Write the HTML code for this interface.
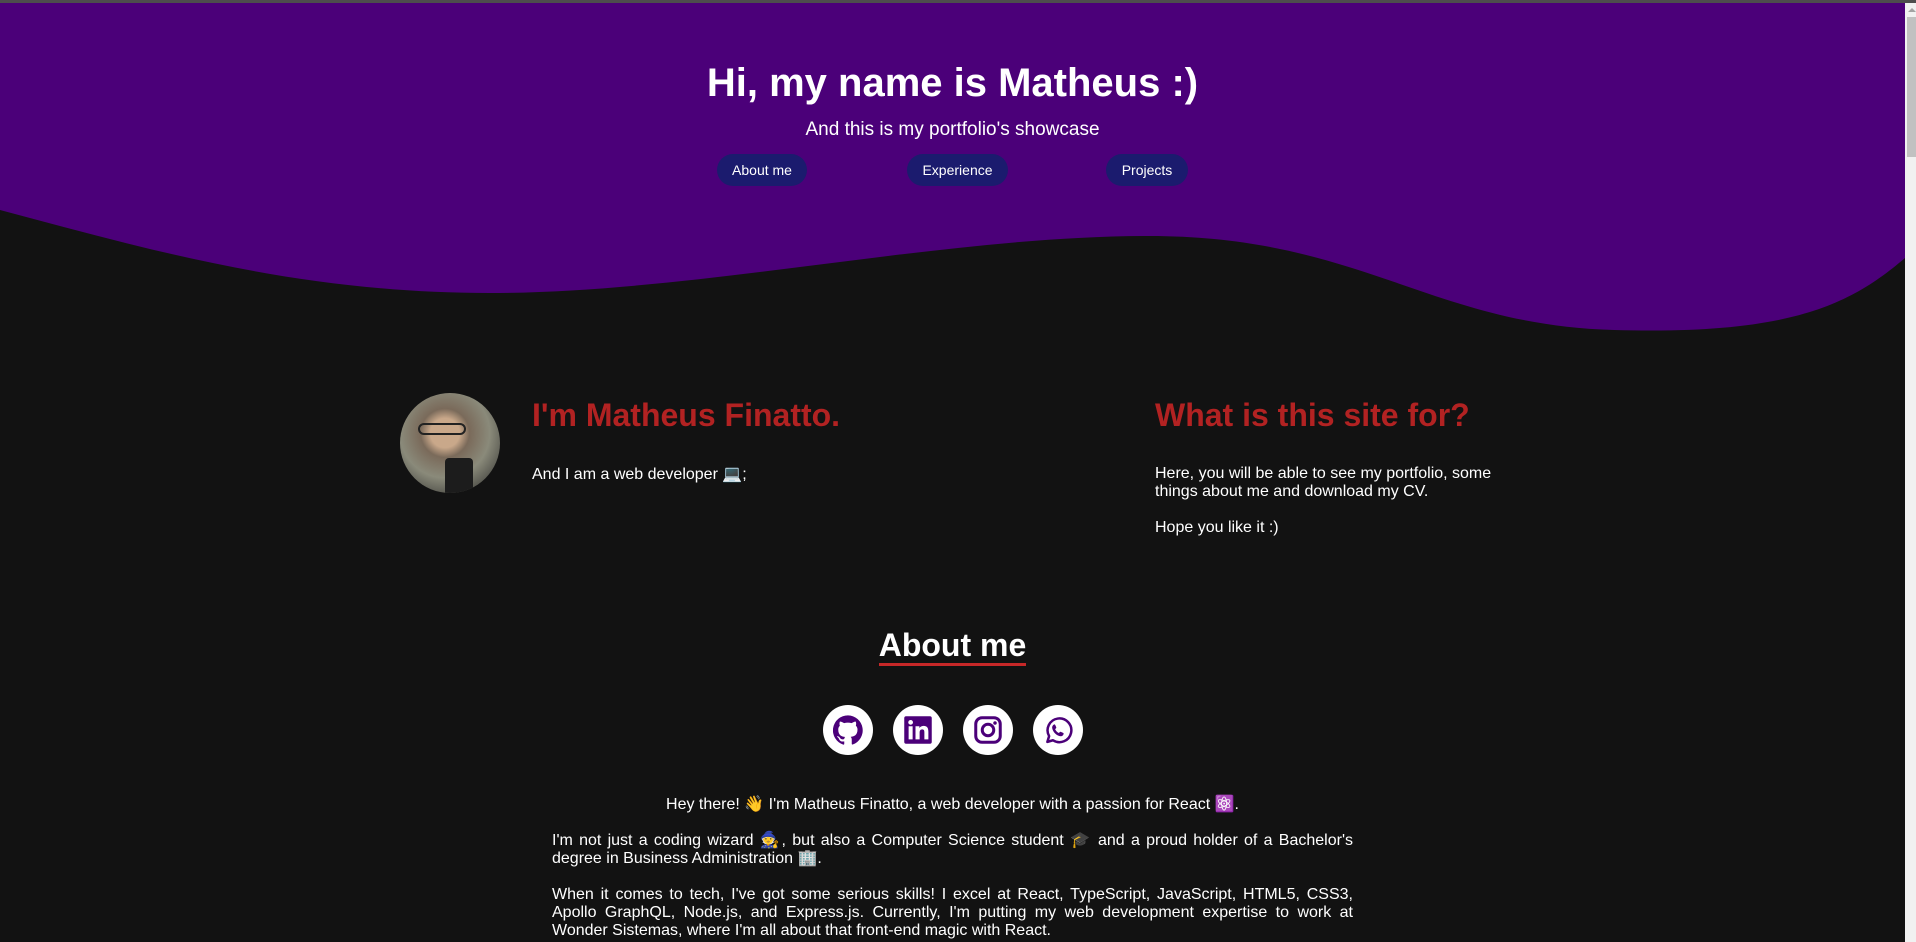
<!DOCTYPE html>
<html><head><meta charset="utf-8"><style>
*{margin:0;padding:0;box-sizing:border-box}
html,body{width:1916px;height:942px;overflow:hidden;background:#121212;font-family:"Liberation Sans",Arial,sans-serif;color:#fff}
.abs{position:absolute}
.btn{position:absolute;top:154px;height:32px;background:#1b1b6e;border-radius:16px;color:#fff;font-size:14px;line-height:32px;text-align:center}
.ic{position:absolute;top:705px;width:50px;height:50px;border-radius:50%;background:#fff}
.ic svg{position:absolute;left:10px;top:10px;width:30px;height:30px}
h2{position:absolute;font-size:32px;font-weight:bold;color:#b22222;white-space:nowrap}
p{font-size:16px;line-height:18px}
</style></head><body>
<div class="abs" style="left:0;top:0;width:1916px;height:3px;background:#4d4d4d;z-index:5"></div>
<svg class="abs" style="left:0;top:0" width="1905" height="340" viewBox="0 0 1905 340">
<path d="M0 0H1905V258C1850 305 1790 335 1614 330C1430 325 1360 236 1149 236C940 236 700 293 489 293C300 293 150 250 0 210Z" fill="#4b0079"/>
</svg>
<div class="abs" style="left:1905px;top:3px;width:11px;height:939px;background:#f1f1f1"></div>
<div class="abs" style="left:1907px;top:17px;width:9px;height:140px;background:#c1c1c1"></div>
<div class="abs" style="left:1908px;top:8px;width:0;height:0;border-left:4px solid transparent;border-right:4px solid transparent;border-bottom:4px solid #a3a3a3"></div>

<div class="abs" style="left:0;width:1905px;top:60px;text-align:center;font-size:40px;font-weight:bold;line-height:46px">Hi, my name is Matheus :)</div>
<div class="abs" style="left:0;width:1905px;top:119px;text-align:center;font-size:19px;line-height:22px">And this is my portfolio's showcase</div>
<div class="btn" style="left:717px;width:90px">About me</div>
<div class="btn" style="left:907px;width:101px">Experience</div>
<div class="btn" style="left:1106px;width:82px">Projects</div>

<div class="abs" style="left:400px;top:393px;width:100px;height:100px;border-radius:50%;overflow:hidden;background:radial-gradient(circle at 45% 40%,#c9a88a 0 18%,#7a6a5a 30%,#8a8a7a 55%,#5a5a52 75%,#3a3a36 100%)">
<div class="abs" style="left:45px;top:65px;width:28px;height:40px;background:#1c1c1c;border-radius:4px"></div>
<div class="abs" style="left:18px;top:30px;width:48px;height:12px;border:2px solid #222;border-radius:6px"></div>
</div>
<h2 style="left:532px;top:397px">I'm Matheus Finatto.</h2>
<p class="abs" style="left:532px;top:466px">And I am a web developer 💻;</p>
<h2 style="left:1155px;top:397px">What is this site for?</h2>
<p class="abs" style="left:1155px;top:465px;width:350px">Here, you will be able to see my portfolio, some things about me and download my CV.<br><br>Hope you like it :)</p>

<div class="abs" style="left:0;width:1905px;top:628px;text-align:center"><span style="font-size:32px;font-weight:bold;line-height:34px;border-bottom:3px solid #c62828">About me</span></div>

<div class="ic" style="left:823px"><svg viewBox="0 0 24 24"><path fill="#4b0079" d="M12 .3a12 12 0 0 0-3.8 23.4c.6.1.8-.3.8-.6v-2c-3.3.7-4-1.6-4-1.6-.6-1.4-1.4-1.8-1.4-1.8-1-.7.1-.7.1-.7 1.2.1 1.8 1.200 1.8 1.2 1 1.8 2.8 1.3 3.5 1 0-.8.4-1.300.7-1.6-2.7-.3-5.500-1.300-5.500-6 0-1.200.5-2.300 1.300-3.100-.2-.4-.6-1.600 0-3.200 0 0 1-.3 3.400 1.200a11.5 11.5 0 0 1 6 0c2.300-1.500 3.300-1.200 3.300-1.200.6 1.600.2 2.800.1 3.200.8.8 1.300 1.900 1.300 3.100 0 4.600-2.800 5.600-5.500 5.900.5.4.9 1.100.9 2.200v3.300c0 .3.1.7.8.6A12 12 0 0 0 12 .3"/></svg></div>
<div class="ic" style="left:893px"><svg viewBox="0 0 24 24"><rect x="1" y="1" width="22" height="22" rx="1.5" fill="#4b0079"/><rect x="4.5" y="9" width="3.2" height="10.5" fill="#fff"/><circle cx="6.1" cy="5.9" r="1.9" fill="#fff"/><path fill="#fff" d="M10 9h3.1v1.5c.5-.9 1.6-1.8 3.3-1.8 3.3 0 3.9 2.1 3.9 4.9v5.9h-3.2v-5.2c0-1.3 0-2.8-1.7-2.8s-2.1 1.3-2.1 2.7v5.3H10z"/></svg></div>
<div class="ic" style="left:963px"><svg viewBox="0 0 24 24"><rect x="2.2" y="2.2" width="19.6" height="19.6" rx="5" fill="none" stroke="#4b0079" stroke-width="2.4"/><circle cx="12" cy="12" r="4.6" fill="none" stroke="#4b0079" stroke-width="2.4"/><circle cx="17.6" cy="6.4" r="1.4" fill="#4b0079"/></svg></div>
<div class="ic" style="left:1033px"><svg viewBox="0 0 24 24"><path d="M3.5 21.5l1.4-4.6A9.5 9.5 0 1 1 8 20.2z" fill="none" stroke="#4b0079" stroke-width="2" stroke-linejoin="round"/><path fill="#4b0079" d="M9 7.5c.4 0 .6.1.8.5l.8 1.8c.1.3 0 .6-.2.8l-.7.8c.6 1.3 1.7 2.4 3 3l.8-.8c.2-.2.5-.3.8-.1l1.8.8c.3.2.5.4.4.8-.2 1.2-1.2 1.900-2.300 1.900-3.300-.3-6.600-3.600-6.900-6.900 0-1.200.7-2.200 1.700-2.600z"/></svg></div>

<div class="abs" style="left:552px;top:796px;width:801px;text-align:justify">
<p style="text-align:center">Hey there! 👋 I'm Matheus Finatto, a web developer with a passion for React ⚛️.</p>
<p><br>I'm not just a coding wizard 🧙, but also a Computer Science student 🎓 and a proud holder of a Bachelor's degree in Business Administration 🏢.</p>
<p><br>When it comes to tech, I've got some serious skills! I excel at React, TypeScript, JavaScript, HTML5, CSS3, Apollo GraphQL, Node.js, and Express.js. Currently, I'm putting my web development expertise to work at Wonder Sistemas, where I'm all about that front-end magic with React.</p>
</div>
</body></html>
